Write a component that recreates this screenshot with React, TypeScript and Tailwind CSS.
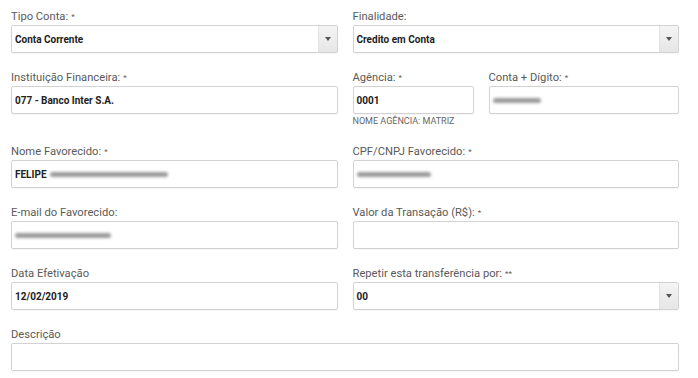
import type { ReactNode } from 'react';

const Label = ({ children, req }: { children: ReactNode; req?: string }) => (
  <label className="block h-4 leading-4 text-[11.2px] text-[#5a5a5a]">
    {children}
    {req && <span className="ml-[3px] text-[8px] align-[1px]">{req}</span>}
  </label>
);

const Box = ({ children }: { children?: ReactNode }) => (
  <div className="h-[28px] flex items-center pl-[3px] pr-[4px] pt-[1px] border border-[#d2d2d2] rounded-[2px] bg-white shadow-[0_1px_1px_rgba(0,0,0,0.04)] text-[10px] font-bold text-[#222]">
    {children}
  </div>
);

const Select = ({ value }: { value: string }) => (
  <div className="h-[28px] flex border border-[#d2d2d2] rounded-[2px] bg-white shadow-[0_1px_1px_rgba(0,0,0,0.04)]">
    <div className="flex-1 flex items-center pl-[3px] pt-[1px] text-[10px] font-bold text-[#222]">{value}</div>
    <div className="w-[19px] flex items-center justify-center bg-gradient-to-b from-[#f4f4f4] to-[#e6e6e6] border-l border-[#e2e2e2]">
      <span className="w-0 h-0 border-l-[3.5px] border-r-[3.5px] border-t-[4px] border-l-transparent border-r-transparent border-t-[#555]" />
    </div>
  </div>
);

const Blur = ({ w }: { w: number }) => (
  <span className="inline-block h-[5px] rounded-full bg-[#9a9a9a] blur-[1.5px]" style={{ width: w }} />
);

export default function App() {
  return (
    <div className="w-[698px] h-[378px] bg-white pt-[9px] pl-[11px] pr-[19px] font-['Roboto',sans-serif] overflow-hidden">
      <div className="grid grid-cols-2 gap-x-[15px] gap-y-[17px]">
        <div>
          <Label req="*">Tipo Conta:</Label>
          <Select value="Conta Corrente" />
        </div>
        <div>
          <Label>Finalidade:</Label>
          <Select value="Credito em Conta" />
        </div>

        <div>
          <Label req="*">Instituição Financeira:</Label>
          <Box>077 - Banco Inter S.A.</Box>
        </div>
        <div className="flex gap-[15px]">
          <div className="w-[121px]">
            <Label req="*">Agência:</Label>
            <Box>0001</Box>
            <p className="h-[11px] leading-[11px] mt-[2px] text-[9px] text-[#666]">NOME AGÊNCIA: MATRIZ</p>
          </div>
          <div className="flex-1">
            <Label req="*">Conta + Dígito:</Label>
            <Box><Blur w={48} /></Box>
          </div>
        </div>

        <div>
          <Label req="*">Nome Favorecido:</Label>
          <Box>FELIPE<span className="ml-[3px] flex"><Blur w={118} /></span></Box>
        </div>
        <div>
          <Label req="*">CPF/CNPJ Favorecido:</Label>
          <Box><Blur w={74} /></Box>
        </div>

        <div>
          <Label>E-mail do Favorecido:</Label>
          <Box><span className="flex"><Blur w={96} /></span></Box>
        </div>
        <div>
          <Label req="*">Valor da Transação (R$):</Label>
          <Box />
        </div>

        <div>
          <Label>Data Efetivação</Label>
          <Box>12/02/2019</Box>
        </div>
        <div>
          <Label req="**">Repetir esta transferência por:</Label>
          <Select value="00" />
        </div>

        <div className="col-span-2">
          <Label>Descrição</Label>
          <Box />
        </div>
      </div>
    </div>
  );
}
